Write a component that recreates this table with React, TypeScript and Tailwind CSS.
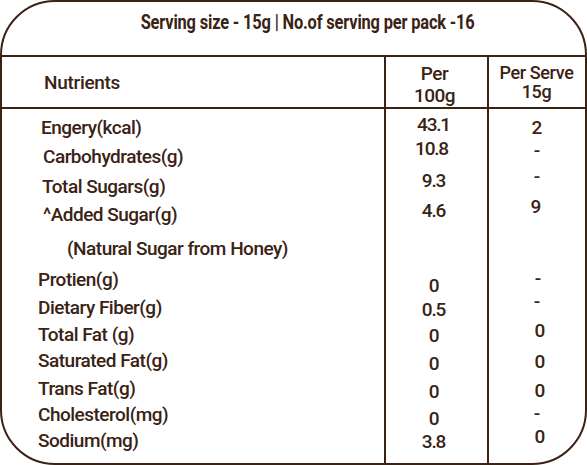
const labels = [
  { text: "Engery(kcal)", cls: "mt-[9px] pl-[39px]" },
  { text: "Carbohydrates(g)", cls: "mt-[8.5px] pl-[41px]" },
  { text: "Total Sugars(g)", cls: "mt-[10.5px] pl-[40px]" },
  { text: "^Added Sugar(g)", cls: "mt-[7.5px] pl-[41px]" },
  { text: "(Natural Sugar from Honey)", cls: "mt-[14.5px] pl-[65px]" },
  { text: "Protien(g)", cls: "mt-[11px] pl-[36px]" },
  { text: "Dietary Fiber(g)", cls: "mt-[8px] pl-[36px]" },
  { text: "Total Fat (g)", cls: "mt-[7px] pl-[36px]" },
  { text: "Saturated Fat(g)", cls: "mt-[6px] pl-[36px]" },
  { text: "Trans Fat(g)", cls: "mt-[7.5px] pl-[36px]" },
  { text: "Cholesterol(mg)", cls: "mt-[6.5px] pl-[36px]" },
  { text: "Sodium(mg)", cls: "mt-[6px] pl-[36px]" },
];

const per100 = [
  { text: "43.1", cls: "mt-[6px]" },
  { text: "10.8", cls: "mt-[4px] pr-[4px]" },
  { text: "9.3", cls: "mt-[12px]" },
  { text: "4.6", cls: "mt-[10px]" },
  { text: "0", cls: "mt-[55px]" },
  { text: "0.5", cls: "mt-[4px]" },
  { text: "0", cls: "mt-[6px]" },
  { text: "0", cls: "mt-[8px]" },
  { text: "0", cls: "mt-[8px]" },
  { text: "0", cls: "mt-[7px]" },
  { text: "3.8", cls: "mt-[3px]" },
];

const perServe = [
  { text: "2", cls: "mt-[9px]" },
  { text: "-", cls: "mt-[3px]" },
  { text: "-", cls: "mt-[6px]" },
  { text: "9", cls: "mt-[10px] pr-[2px]" },
  { text: "-", cls: "mt-[52px] pl-[2px]" },
  { text: "-", cls: "mt-[3px]" },
  { text: "0", cls: "mt-[9px] pl-[6px]" },
  { text: "0", cls: "mt-[11px] pl-[6px]" },
  { text: "0", cls: "mt-[9px] pl-[6px]" },
  { text: "-", cls: "mt-[3px]" },
  { text: "0", cls: "mt-[3px] pl-[6px]" },
];

export default function App() {
  return (
    <div className="w-[587px] h-[465px] bg-white font-['Roboto',sans-serif] text-[#3a2215]">
      <div className="w-full h-full border-2 border-[#3a2215] rounded-[55px] overflow-hidden flex flex-col">
        <div className="h-[55px] shrink-0 border-b-2 border-[#3a2215] pl-[28px] pt-[9px] text-center text-[20px] leading-[22px] font-bold">
          <span className="inline-block whitespace-nowrap scale-x-[0.82] tracking-[-0.2px]">
            Serving size - 15g | No.of serving per pack -16
          </span>
        </div>

        <div className="h-[52px] shrink-0 border-b-2 border-[#3a2215] grid grid-cols-[382px_103px_98px] font-medium">
          <div className="pl-[42px] pt-[16px] text-[19px] leading-[20px] tracking-[-0.3px]">Nutrients</div>
          <div className="border-l-2 border-[#3a2215] pt-[6px] pr-[4px] text-center text-[19px] leading-[22px] tracking-[-0.5px]">
            Per
            <br />
            100g
          </div>
          <div className="border-l-2 border-[#3a2215] pt-[6px] pr-[1px] text-center text-[18px] leading-[19px] tracking-[-0.4px]">
            Per Serve
            <br />
            15g
          </div>
        </div>

        <div className="flex-1 grid grid-cols-[382px_103px_98px] text-[19px] leading-[20px] font-medium">
          <div className="flex flex-col tracking-[-0.5px]">
            {labels.map((l, i) => (
              <div key={i} className={`h-[20px] whitespace-nowrap ${l.cls}`}>
                {l.text}
              </div>
            ))}
          </div>
          <div className="border-l-2 border-[#3a2215] flex flex-col pr-[6px] tracking-[-1.2px]">
            {per100.map((v, i) => (
              <div key={i} className={`h-[20px] text-center ${v.cls}`}>
                {v.text}
              </div>
            ))}
          </div>
          <div className="border-l-2 border-[#3a2215] flex flex-col">
            {perServe.map((v, i) => (
              <div key={i} className={`h-[20px] text-center ${v.cls}`}>
                {v.text}
              </div>
            ))}
          </div>
        </div>
      </div>
    </div>
  );
}
